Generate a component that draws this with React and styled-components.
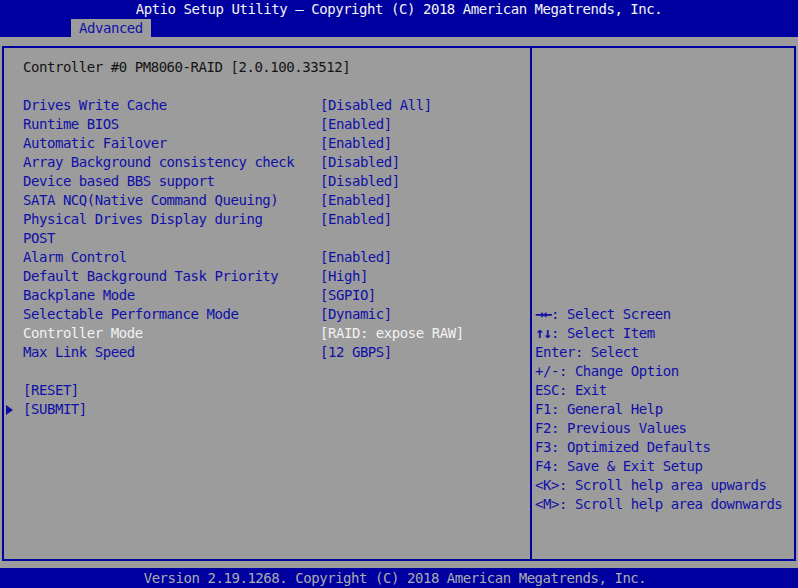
import React from 'react'
import styled, {createGlobalStyle} from 'styled-components'

const BLUE = '#0000a0'
const INK = '#1010a8'
const GREY = '#9c9c9c'

const GlobalStyle = createGlobalStyle`
  html, body {
    margin: 0;
    padding: 0;
    background: ${GREY};
  }
  body {
    font-family: "DejaVu Sans Mono", "Liberation Mono", monospace;
    font-size: 14px;
    letter-spacing: -0.45px;
  }
`

const ScreenStl = styled.div`
  width: 798px;
  height: 588px;
  display: flex;
  flex-direction: column;
  background: ${GREY};
  overflow: hidden;
`

const TopBarStl = styled.header`
  height: 37px;
  background: ${BLUE};
  display: flex;
  flex-direction: column;
`

const TitleStl = styled.div`
  height: 19px;
  line-height: 19px;
  text-align: center;
  color: #f4f4f4;
  white-space: pre;
`

const TabRowStl = styled.div`
  height: 18px;
  display: flex;
  padding-left: 71px;
`

const TabStl = styled.div`
  width: 80px;
  padding-left: 8px;
  box-sizing: border-box;
  background: ${GREY};
  color: ${INK};
  line-height: 18px;
`

const BodyStl = styled.main`
  flex: 1;
  padding: 9px 2px 7px 2px;
  display: flex;
`

const FrameStl = styled.div`
  flex: 1;
  border: 2px solid ${BLUE};
  display: grid;
  grid-template-columns: 528px 1fr;
`

const LeftPanelStl = styled.section`
  border-right: 2px solid ${BLUE};
  padding: 10px 0 0 2px;
`

const RightPanelStl = styled.aside`
  padding: 257px 0 0 3px;
`

const RowStl = styled.div`
  display: grid;
  grid-template-columns: 17px 297px 1fr;
  line-height: 19px;
  min-height: 19px;
  white-space: pre;
  color: ${({$tone}) =>
    $tone === 'white' ? '#f2f2f2' : $tone === 'dark' ? '#141414' : INK};
`

const MarkerStl = styled.span`
  display: flex;
  align-items: center;
  &::before {
    content: '';
    display: ${({$on}) => ($on ? 'block' : 'none')};
    width: 0;
    height: 0;
    border-top: 5px solid transparent;
    border-bottom: 5px solid transparent;
    border-left: 7px solid ${INK};
  }
`

const SpanStl = styled.span`
  grid-column: ${({$wide}) => ($wide ? '2 / 4' : 'auto')};
`

const HelpRowStl = styled.div`
  line-height: 19px;
  color: ${INK};
  white-space: pre;
`

const KeyGlyphStl = styled.b`
  font-size: 15px;
  font-weight: bold;
  letter-spacing: -1.03px;
`

const FooterStl = styled.footer`
  height: 20px;
  line-height: 20px;
  padding-right: 8px;
  background: ${BLUE};
  color: #acacac;
  text-align: center;
  white-space: pre;
`

const items = [
  {label: 'Drives Write Cache', value: '[Disabled All]'},
  {label: 'Runtime BIOS', value: '[Enabled]'},
  {label: 'Automatic Failover', value: '[Enabled]'},
  {label: 'Array Background consistency check', value: '[Disabled]'},
  {label: 'Device based BBS support', value: '[Disabled]'},
  {label: 'SATA NCQ(Native Command Queuing)', value: '[Enabled]'},
  {label: 'Physical Drives Display during', value: '[Enabled]'},
  {label: 'POST', value: ''},
  {label: 'Alarm Control', value: '[Enabled]'},
  {label: 'Default Background Task Priority', value: '[High]'},
  {label: 'Backplane Mode', value: '[SGPIO]'},
  {label: 'Selectable Performance Mode', value: '[Dynamic]'},
  {label: 'Controller Mode', value: '[RAID: expose RAW]', tone: 'white'},
  {label: 'Max Link Speed', value: '[12 GBPS]'},
]

const help = [
  {glyph: '→←', text: ': Select Screen'},
  {glyph: '↑↓', text: ': Select Item'},
  {text: 'Enter: Select'},
  {text: '+/-: Change Option'},
  {text: 'ESC: Exit'},
  {text: 'F1: General Help'},
  {text: 'F2: Previous Values'},
  {text: 'F3: Optimized Defaults'},
  {text: 'F4: Save & Exit Setup'},
  {text: '<K>: Scroll help area upwards'},
  {text: '<M>: Scroll help area downwards'},
]

const Row = ({label, value, tone, marker, wide}) => (
  <RowStl $tone={tone}>
    <MarkerStl $on={marker} />
    <SpanStl $wide={wide}>{label}</SpanStl>
    {!wide && <span>{value}</span>}
  </RowStl>
)

export default function App() {
  return (
    <>
      <GlobalStyle />
      <ScreenStl>
        <TopBarStl>
          <TitleStl>Aptio Setup Utility – Copyright (C) 2018 American Megatrends, Inc.</TitleStl>
          <TabRowStl><TabStl>Advanced</TabStl></TabRowStl>
        </TopBarStl>
        <BodyStl>
          <FrameStl>
            <LeftPanelStl>
              <Row label="Controller #0 PM8060-RAID [2.0.100.33512]" tone="dark" wide />
              <Row label="" />
              {items.map((it) => (
                <Row key={it.label} {...it} />
              ))}
              <Row label="" />
              <Row label="[RESET]" />
              <Row label="[SUBMIT]" marker />
            </LeftPanelStl>
            <RightPanelStl>
              {help.map((h) => (
                <HelpRowStl key={h.text}>
                  {h.glyph && <KeyGlyphStl>{h.glyph}</KeyGlyphStl>}
                  {h.text}
                </HelpRowStl>
              ))}
            </RightPanelStl>
          </FrameStl>
        </BodyStl>
        <FooterStl>Version 2.19.1268. Copyright (C) 2018 American Megatrends, Inc.</FooterStl>
      </ScreenStl>
    </>
  )
}
